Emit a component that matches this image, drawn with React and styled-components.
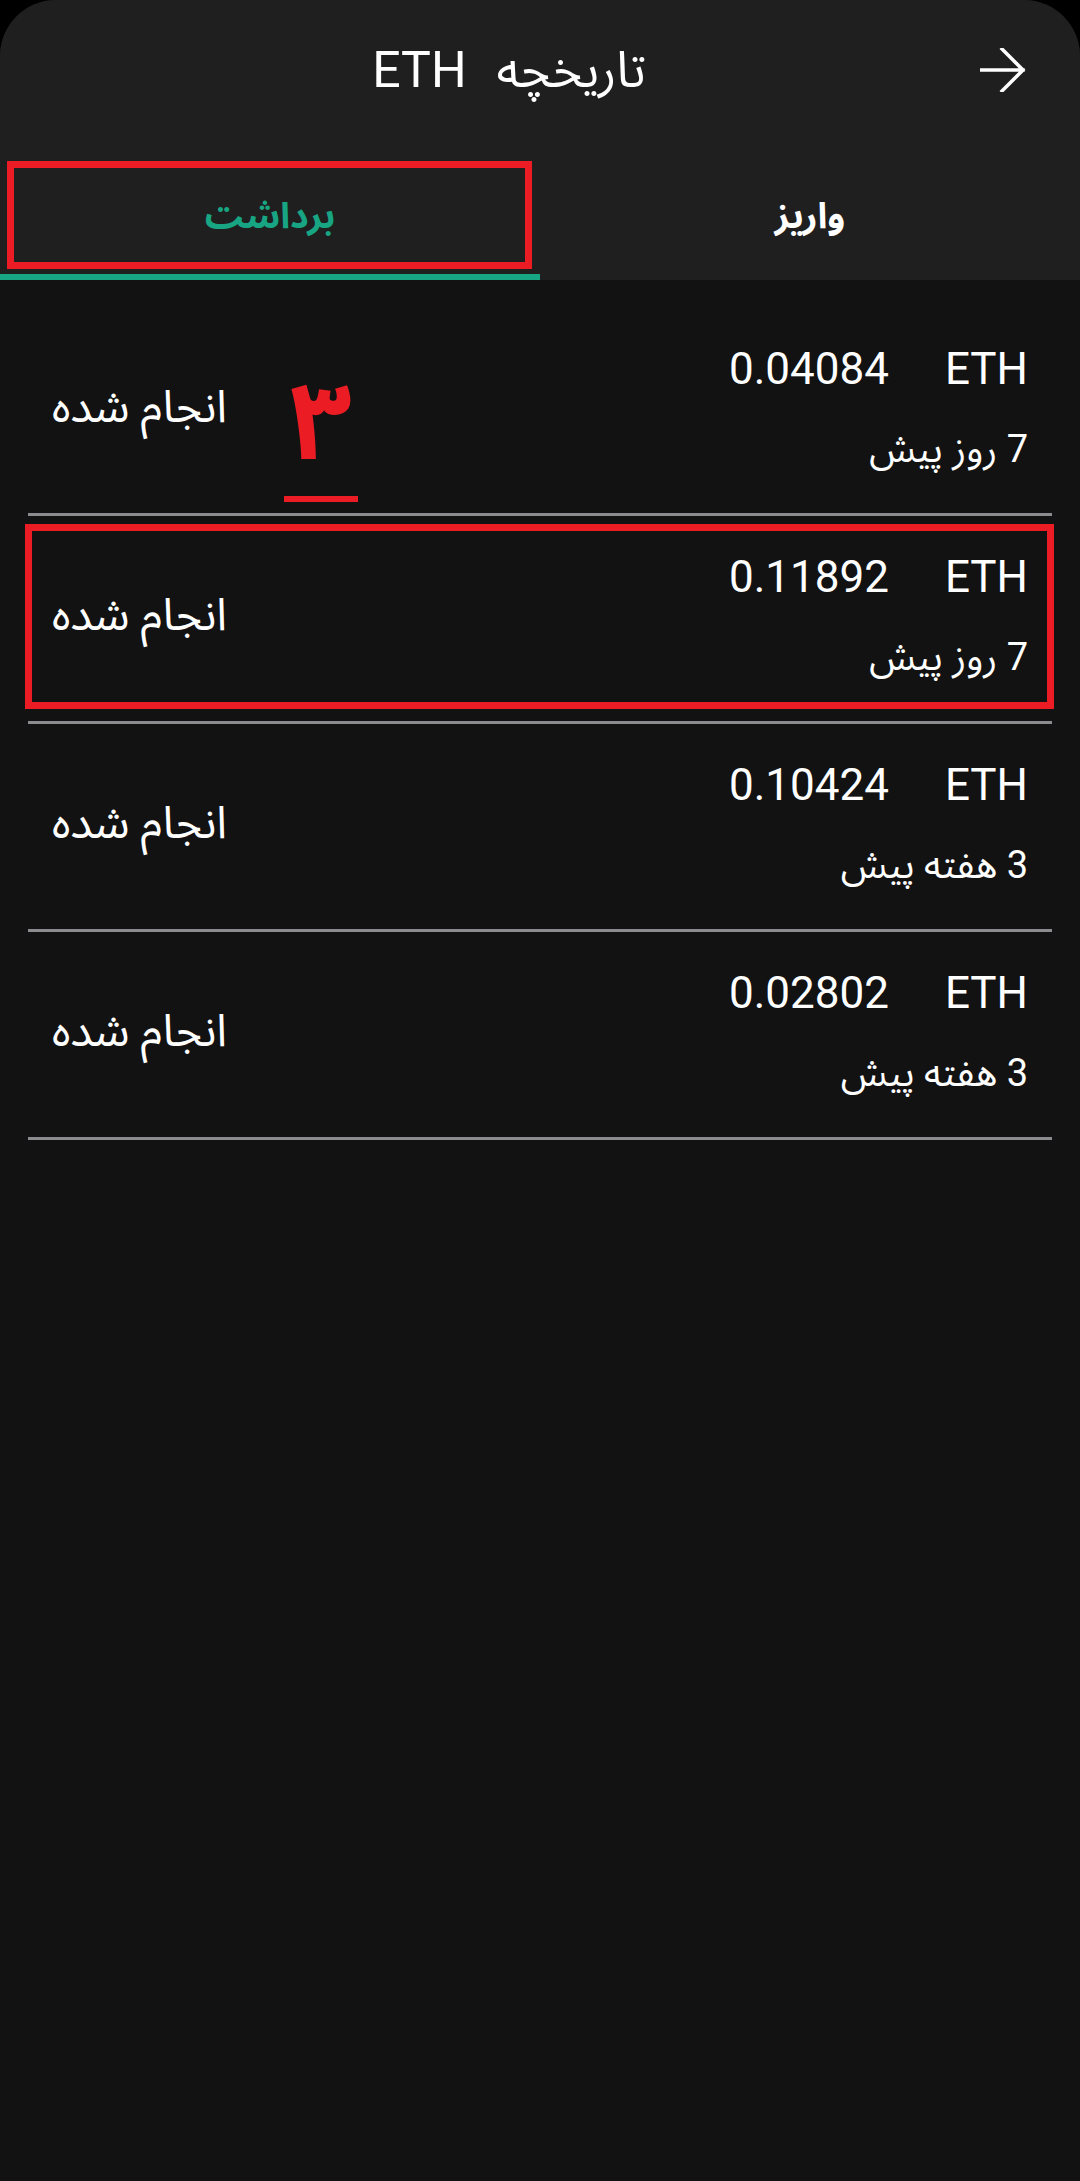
import React from "react"
import styled, { createGlobalStyle } from "styled-components"

const GlobalStyle = createGlobalStyle`
  * {
    box-sizing: border-box;
  }
  html,
  body {
    margin: 0;
    padding: 0;
    background: #000;
  }
  body {
    font-family: Roboto, "Noto Sans Arabic", "DejaVu Sans", sans-serif;
    color: #fff;
  }
`

const Screen = styled.div`
  direction: rtl;
  min-height: 100vh;
  background: #121212;
  border-radius: 56px 56px 0 0;
  overflow: hidden;
`

const Head = styled.header`
  background: #1f1f1f;
`

const TopBar = styled.div`
  height: 140px;
  display: flex;
  align-items: center;
  gap: 18px;
  padding: 0 54px 0 56px;
`

const BackButton = styled.button`
  width: 46px;
  height: 44px;
  padding: 0;
  border: none;
  background: none;
  color: #fff;
  display: flex;
  align-items: center;
  justify-content: center;
`

const Title = styled.h1`
  flex: 1;
  margin: 0;
  display: flex;
  justify-content: center;
  align-items: center;
  gap: 30px;
  font-size: 50px;
  font-weight: 400;
  line-height: 1;
`

const Tabs = styled.nav`
  display: flex;
  height: 140px;
`

const Tab = styled.div`
  position: relative;
  flex: 1;
  display: flex;
  justify-content: center;
  padding-top: 56px;
  font-size: 36px;
  font-weight: 700;
  line-height: 40px;
  color: ${(p) => (p.$active ? "#17a583" : "#fff")};
  border-bottom: 6px solid ${(p) => (p.$active ? "#17a583" : "transparent")};

  ${(p) =>
    p.$boxed &&
    `
    &::after {
      content: "";
      position: absolute;
      top: 21px;
      bottom: 5px;
      left: 7px;
      right: 8px;
      border: 7px solid #ec1c24;
    }
  `}
`

const List = styled.main`
  padding: 28px 28px 0;
`

const Row = styled.div`
  position: relative;
  display: flex;
  justify-content: space-between;
  align-items: center;
  padding: 34px 24px 41px;
  border-bottom: 3px solid #8b8b90;

  ${(p) =>
    p.$marked &&
    `
    &::after {
      content: "";
      position: absolute;
      top: 8px;
      bottom: 12px;
      left: -3px;
      right: -2px;
      border: 7px solid #ec1c24;
    }
  `}
`

const Info = styled.div`
  display: flex;
  flex-direction: column;
  align-items: flex-start;
  gap: 30px;
`

const Amount = styled.div`
  display: flex;
  gap: 56px;
  font-size: 44px;
  line-height: 54px;
`

const Value = styled.span`
  direction: ltr;
`

const Ago = styled.div`
  font-size: 38px;
  line-height: 46px;
`

const Status = styled.div`
  font-size: 45px;
  line-height: 46px;
`

const Mark = styled.div`
  position: absolute;
  left: 254px;
  top: 60px;
  width: 78px;
  display: flex;
  flex-direction: column;
  align-items: center;
  color: #ec1c24;
`

const MarkDigit = styled.span`
  font-size: 108px;
  font-weight: 700;
  line-height: 106px;
`

const MarkLine = styled.span`
  width: 74px;
  height: 6px;
  margin-top: 22px;
  background: #ec1c24;
`

const ArrowIcon = () => (
  <svg width="46" height="44" viewBox="0 0 46 44" fill="none">
    <path
      d="M1 22h42M22 1l21 21-21 21"
      stroke="currentColor"
      strokeWidth="3.5"
      strokeLinecap="square"
    />
  </svg>
)

const rows = [
  { amount: "0.04084", ago: "7 روز پیش", mark: "۳" },
  { amount: "0.11892", ago: "7 روز پیش", marked: true },
  { amount: "0.10424", ago: "3 هفته پیش" },
  { amount: "0.02802", ago: "3 هفته پیش" },
]

export default function App() {
  return (
    <>
      <GlobalStyle />
      <Screen>
        <Head>
          <TopBar>
            <BackButton>
              <ArrowIcon />
            </BackButton>
            <Title>
              <span>تاریخچه</span>
              <span>ETH</span>
            </Title>
          </TopBar>
          <Tabs>
            <Tab>واریز</Tab>
            <Tab $active $boxed>
              برداشت
            </Tab>
          </Tabs>
        </Head>
        <List>
          {rows.map((row, i) => (
            <Row key={i} $marked={row.marked}>
              <Info>
                <Amount>
                  <span>ETH</span>
                  <Value>{row.amount}</Value>
                </Amount>
                <Ago>{row.ago}</Ago>
              </Info>
              <Status>انجام شده</Status>
              {row.mark && (
                <Mark>
                  <MarkDigit>{row.mark}</MarkDigit>
                  <MarkLine />
                </Mark>
              )}
            </Row>
          ))}
        </List>
      </Screen>
    </>
  )
}
